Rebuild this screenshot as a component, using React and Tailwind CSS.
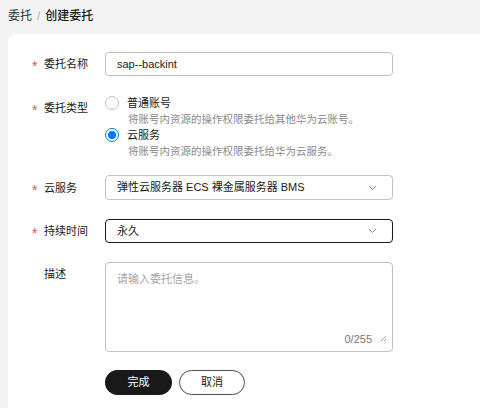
import React from 'react';

const font = { fontFamily: '"Liberation Sans", "Noto Sans CJK SC", sans-serif' };

const Chevron = () => (
  <svg width="9" height="6" viewBox="0 0 9 6" className="shrink-0">
    <path d="M1 1l3.5 3.5L8 1" fill="none" stroke="#8a8a8a" strokeWidth="1" />
  </svg>
);

const Label = ({ text, required = true, className = '' }) => (
  <div className={`w-[97px] shrink-0 pl-[24px] flex items-center h-6 ${className}`}>
    <span className="w-[12px] h-6 flex items-center">
      {required && <span className="text-[#f2475a] text-[14px] leading-none translate-y-[2px]">*</span>}
    </span>
    <span className="text-[11px] text-[#191919]">{text}</span>
  </div>
);

const Radio = ({ checked, title, desc }) => (
  <div>
    <div className="flex items-center h-4 leading-4">
      {checked ? (
        <span className="w-[14px] h-[14px] rounded-full border border-[#0077ff] flex items-center justify-center">
          <span className="w-[8px] h-[8px] rounded-full bg-[#0077ff]" />
        </span>
      ) : (
        <span className="w-[14px] h-[14px] rounded-full border border-[#c2c2c2] bg-white" />
      )}
      <span className="ml-2 text-[11px] text-[#191919]">{title}</span>
    </div>
    <div className="pl-[23px] h-4 leading-4 text-[10.5px] text-[#8a8a8a]">{desc}</div>
  </div>
);

export default function App() {
  return (
    <div className="min-h-screen bg-[#f3f3f3] text-[#191919]" style={font}>
      {/* breadcrumb */}
      <div className="h-[34px] pb-[3px] pl-2 flex items-center text-[12px]">
        <span className="text-[#333333]">委托</span>
        <span className="mx-[5px] text-[#b3b3b3]">/</span>
        <span className="font-medium">创建委托</span>
      </div>

      <div className="ml-2 bg-white rounded-tl-lg pt-[18px] pb-6">
        {/* name */}
        <div className="flex">
          <Label text="委托名称" />
          <div className="w-[288px] h-6 border border-[#c2c2c2] rounded-[4px] px-[11px] flex items-center text-[11px]">
            sap--backint
          </div>
        </div>

        {/* type */}
        <div className="flex mt-[19px]">
          <Label text="委托类型" className="mt-[1px]" />
          <div>
            <Radio title="普通账号" desc="将账号内资源的操作权限委托给其他华为云账号。" />
            <Radio checked title="云服务" desc="将账号内资源的操作权限委托给华为云服务。" />
          </div>
        </div>

        {/* service */}
        <div className="flex mt-4">
          <Label text="云服务" className="mt-[1px]" />
          <div className="w-[288px] h-[25px] border border-[#c2c2c2] rounded-[4px] pl-[11px] pr-[15px] flex items-center justify-between text-[11px]">
            <span>弹性云服务器 ECS 裸金属服务器 BMS</span>
            <Chevron />
          </div>
        </div>

        {/* duration */}
        <div className="flex mt-[19px]">
          <Label text="持续时间" />
          <div className="w-[288px] h-6 border border-[#191919] rounded-[4px] pl-[11px] pr-[15px] flex items-center justify-between text-[11px]">
            <span>永久</span>
            <Chevron />
          </div>
        </div>

        {/* description */}
        <div className="flex mt-[19px]">
          <Label text="描述" required={false} />
          <div className="w-[288px] h-[90px] border border-[#c2c2c2] rounded-[4px] px-[11px] pt-[8px] pb-[4px] flex flex-col justify-between text-[11px]">
            <span className="text-[#a6a6a6] leading-4">请输入委托信息。</span>
            <div className="flex items-center justify-end gap-[8px] text-[11px] text-[#7a7a7a]">
              <span>0/255</span>
              <svg width="7" height="7" viewBox="0 0 7 7" className="-mr-[6px]">
                <path d="M6 1L1 6M6 4L4 6" stroke="#9a9a9a" strokeWidth="0.8" fill="none" />
              </svg>
            </div>
          </div>
        </div>

        {/* actions */}
        <div className="flex mt-[18px] pl-[97px] gap-[7px]">
          <button className="w-[67px] h-[25px] rounded-full bg-[#191919] text-white text-[11px]">完成</button>
          <button className="w-[66px] h-[25px] rounded-full border border-[#4d4d4d] bg-white text-[#191919] text-[11px]">取消</button>
        </div>
      </div>
    </div>
  );
}
